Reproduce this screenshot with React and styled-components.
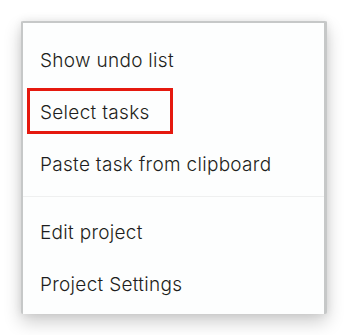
import styled, { createGlobalStyle } from 'styled-components';

const GlobalStyle = createGlobalStyle`
  html, body {
    margin: 0;
    padding: 0;
    background: #ffffff;
  }
  body {
    font-family: 'Inter', 'Noto Sans', sans-serif;
    -webkit-font-smoothing: antialiased;
  }
`;

const items = [
  { label: 'Show undo list' },
  { label: 'Select tasks', highlighted: true },
  { label: 'Paste task from clipboard' },
  { divider: true },
  { label: 'Edit project' },
  { label: 'Project Settings' },
];

function App() {
  return (
    <Page>
      <GlobalStyle />
      <Menu>
        {items.map((item, i) =>
          item.divider ? (
            <Divider key={i} />
          ) : (
            <MenuItem key={i} $highlighted={item.highlighted}>
              {item.label}
            </MenuItem>
          )
        )}
      </Menu>
    </Page>
  );
}

export default App;

const Page = styled.div`
  padding: 21px 0 0 21px;
  width: 347px;
  height: 335px;
  box-sizing: border-box;
`;

const Menu = styled.div`
  display: flex;
  flex-direction: column;
  width: 306px;
  height: 293px;
  box-sizing: border-box;
  padding: 11px 0 5px;
  background: #fdfefe;
  border: 2px solid #c6c8c8;
  border-right-width: 3px;
  border-bottom: none;
  border-radius: 2px;
  box-shadow: 0 8px 18px rgba(0, 0, 0, 0.2), 0 0 8px rgba(0, 0, 0, 0.08);
`;

const MenuItem = styled.div`
  position: relative;
  display: flex;
  align-items: center;
  height: 52px;
  flex-shrink: 0;
  padding-left: 17px;
  font-size: 19px;
  font-weight: 350;
  letter-spacing: 0.3px;
  color: #1e1e20;

  ${({ $highlighted }) =>
    $highlighted &&
    `
    &::after {
      content: '';
      position: absolute;
      left: 4px;
      top: 2px;
      width: 146px;
      height: 46px;
      box-sizing: border-box;
      border: 3px solid #e5190f;
    }
  `}
`;

const Divider = styled.div`
  height: 1px;
  margin: 6px 0 9px;
  background: #eff0f0;
  flex-shrink: 0;
`;
